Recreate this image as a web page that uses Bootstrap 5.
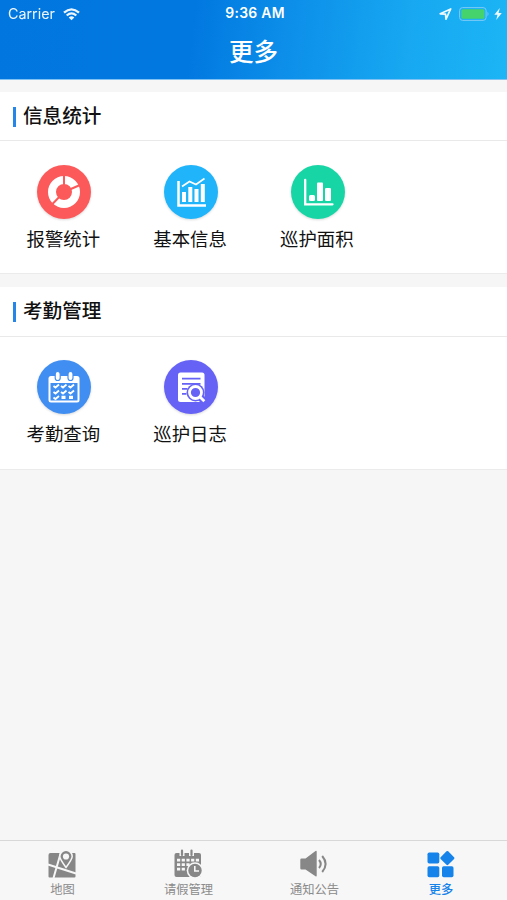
<!DOCTYPE html>
<html lang="zh-CN">
<head>
<meta charset="utf-8">
<meta name="viewport" content="width=device-width, initial-scale=1">
<title>更多</title>
<link href="https://cdn.jsdelivr.net/npm/bootstrap@5.3.0/dist/css/bootstrap.min.css" rel="stylesheet">
<style>
body{font-family:"Inter","Noto Sans CJK SC",sans-serif;background:#f6f6f6;color:#111}
.app-head{height:79.5px;background:linear-gradient(97deg,#0176df 0%,#0178e0 38%,#0c8ee9 56%,#17a8f1 80%,#1cb5f5 100%);border-bottom:1px solid #80c2f4}
.status-bar{height:28px;font-size:14.3px;padding:0 5px 0 8px}
.status-side{flex:1 1 0;opacity:.93}
.status-time{font-weight:600;font-size:13.9px;letter-spacing:.3px;padding-bottom:1px}
.battery{margin-left:7px}
.page-title{font-size:24.5px;line-height:46px;font-weight:500;font-family:"Noto Sans CJK SC",sans-serif}
.panel{background:#fff;margin-top:12.5px;height:182px;border-bottom:1px solid #ebebeb}
.panel + .panel{margin-top:13px;height:183px}
.panel-title{height:49px;border-bottom:1px solid #e9e9e9;padding:2px 0 0 13px;gap:7.5px;font-size:19.6px;font-weight:500;line-height:1}
.panel + .panel .panel-title{height:49.5px}
.title-bar{width:2.5px;height:20px;background:#2586e8}
.tile{padding-top:24px;font-size:18.4px;line-height:27px}
.panel + .panel .tile{padding-top:23.5px}
.tile svg{filter:drop-shadow(0 1px 1px rgba(0,0,0,.15));margin:0 0 7px 1.5px}
.tab-row{height:60px;background:#f7f7f7;border-top:1px solid #d8d8d8;color:#8b8b8b;padding-right:3px}
.tab{font-size:12.3px;line-height:18px;padding-top:8px}
.tab svg{margin:0 1.5px 2px 0}
.tab span{margin-right:1px}
.tab.active{color:#1583ea;font-weight:500}
.tab.active svg,.tab.active span{margin-right:0}
</style>
<script src="https://cdn.jsdelivr.net/npm/bootstrap@5.3.0/dist/js/bootstrap.bundle.min.js"></script>
</head>
<body class="vh-100 d-flex flex-column overflow-hidden">
<header class="app-head text-white flex-shrink-0">
  <div class="status-bar d-flex align-items-center">
    <div class="status-side d-flex align-items-center"><span>Carrier</span>
      <svg class="ms-2" width="17" height="13" viewBox="0 0 17 13" fill="none" stroke="#fff" stroke-width="2.3"><path d="M1 4.7Q8.500-2 16 4.700M3.700 7.500Q8.500 3.300 13.300 7.500"/><path d="M5.700 9.500Q8.500 7.200 11.300 9.500L8.500 12.300Z" fill="#fff" stroke="none"/></svg>
    </div>
    <div class="status-time">9:36 AM</div>
    <div class="status-side d-flex align-items-center justify-content-end">
      <svg width="13" height="12" viewBox="0 0 13 12" fill="none" stroke="#fff" stroke-width="1.700" stroke-linejoin="round"><path d="M1.200 5.800L11.700.900 7 11.200 6.500 6.200Z"/></svg>
      <svg class="battery" width="31" height="14" viewBox="0 0 31 14"><rect x=".6" y=".6" width="26.500" height="12.800" rx="3" fill="none" stroke="#83cdf8"/><rect x="2.300" y="2.300" width="23.100" height="9.400" rx="1.500" fill="#48d663"/><path d="M28.500 4.800q2 2.200 0 4.400z" fill="#83cdf8"/></svg>
      <svg class="ms-1" width="8" height="12" viewBox="0 0 8 12" fill="#fff"><path d="M5.800 0L.3 6.700H3.500L2.200 12 7.800 4.900H4.500Z"/></svg>
    </div>
  </div>
  <h1 class="page-title text-center m-0">更多</h1>
</header>
<main class="flex-grow-1">
  <section class="panel">
    <h2 class="panel-title d-flex align-items-center m-0"><span class="title-bar"></span>信息统计</h2>
    <div class="row g-0 text-center">
      <div class="tile col-3 d-flex flex-column align-items-center">
        <svg width="54" height="54" viewBox="0 0 54 54"><circle cx="27" cy="27" r="27" fill="#fc5a5a"/><circle cx="27" cy="27" r="12" fill="none" stroke="#fff" stroke-width="8"/><path d="M27 27V10M27 27L43 20M27 27L14.500 40" stroke="#fc5a5a" stroke-width="2"/></svg>
        <span>报警统计</span>
      </div>
      <div class="tile col-3 d-flex flex-column align-items-center">
        <svg width="54" height="54" viewBox="0 0 54 54"><circle cx="27" cy="27" r="27" fill="#20b4fa"/><path d="M14.500 16V40.500H42" fill="none" stroke="#fff" stroke-width="2.500"/><path d="M18 27h4v10h-4zM24.300 22h4v15h-4zM30.500 24h4v13h-4zM36.800 19h4v18h-4z" fill="#fff"/><path d="M18 21.500L25.500 16.500 32 19.500 40.500 13.500" fill="none" stroke="#fff" stroke-width="1.700"/></svg>
        <span>基本信息</span>
      </div>
      <div class="tile col-3 d-flex flex-column align-items-center">
        <svg width="54" height="54" viewBox="0 0 54 54"><circle cx="27" cy="27" r="27" fill="#18d5a6"/><path d="M14.200 15V39.300H41.500" fill="none" stroke="#fff" stroke-width="2.300" stroke-linecap="round"/><g fill="#fff"><rect x="18" y="30" width="6" height="6" rx="1.500"/><rect x="26" y="17.500" width="6" height="18.500" rx="1"/><rect x="34" y="23" width="6" height="13" rx="1.300"/></g></svg>
        <span>巡护面积</span>
      </div>
    </div>
  </section>
  <section class="panel">
    <h2 class="panel-title d-flex align-items-center m-0"><span class="title-bar"></span>考勤管理</h2>
    <div class="row g-0 text-center">
      <div class="tile col-3 d-flex flex-column align-items-center">
        <svg width="54" height="54" viewBox="0 0 54 54"><circle cx="27" cy="27" r="27" fill="#408ef2"/><rect x="11.500" y="16" width="31" height="26.500" rx="2.500" fill="#fff"/><rect x="13.500" y="23" width="27" height="17.500" fill="#408ef2"/><g fill="#fff" stroke="#408ef2" stroke-width="1.200"><rect x="18.200" y="11.500" width="5" height="9" rx="2.500"/><rect x="31" y="11.500" width="5" height="9" rx="2.500"/></g><path d="M16.500 26l2 1.500 3.500-3M24 26l2 1.500 3.500-3M31.500 26l2 1.500 3.500-3M16.500 32l2 1.500 3.500-3M24 32l2 1.500 3.500-3M31.500 32l2 1.500 3.500-3M16.500 37.500l2 1.500 3.500-3" fill="none" stroke="#fff" stroke-width="1.800"/><path d="M24.500 35.800h4v3.200h-4zM32 35.800h4v3.200h-4z" fill="#fff"/></svg>
        <span>考勤查询</span>
      </div>
      <div class="tile col-3 d-flex flex-column align-items-center">
        <svg width="54" height="54" viewBox="0 0 54 54"><circle cx="27" cy="27" r="27" fill="#6562f5"/><rect x="14" y="12.500" width="26.500" height="29.500" rx="2.500" fill="#fff"/><path d="M18 18.700H36.500M18 23.800H36.500M18 28.800H23.500M18 33.800H22.500" stroke="#6562f5" stroke-width="1.700"/><path d="M35.500 36.500L42 43" stroke="#6562f5" stroke-width="7"/><circle cx="31.500" cy="32.500" r="9" fill="#6562f5"/><circle cx="31.500" cy="32.500" r="6" fill="none" stroke="#fff" stroke-width="2.800"/><path d="M35.800 36.800L40.300 41.300" stroke="#fff" stroke-width="2.800"/></svg>
        <span>巡护日志</span>
      </div>
    </div>
  </section>
</main>
<nav class="tab-row row g-0 text-center flex-shrink-0">
  <div class="tab col-3 d-flex flex-column align-items-center">
    <svg width="30" height="30" viewBox="0 0 30 30"><path d="M3.500 4H27.500q1 0 1 1V27.500q0 1-1 1H2.500q-1 0-1-1V6q0-2 2-2z" fill="#878787"/><path d="M1 15.500L29 24.500M14 3L6.500 29" stroke="#f7f7f7" stroke-width="2"/><path d="M19 18.500Q12.800 10 12.800 7.500A6.200 6.200 0 0 1 25.200 7.500Q25.200 10 19 18.500Z" fill="#878787" stroke="#f7f7f7" stroke-width="1.500"/><circle cx="19" cy="7.500" r="3.100" fill="#f7f7f7"/></svg>
    <span>地图</span>
  </div>
  <div class="tab col-3 d-flex flex-column align-items-center">
    <svg width="30" height="30" viewBox="0 0 30 30"><rect x="1.500" y="4" width="26.500" height="24" rx="2" fill="#878787"/><path d="M9 1V7M18.500 1V7" stroke="#f7f7f7" stroke-width="5"/><path d="M9 1.500V6M18.500 1.500V6" stroke="#878787" stroke-width="2.200" stroke-linecap="round"/><path d="M4 9.700h3.200v2.800H4zM8.700 9.700h3.200v2.800H8.700zM13.400 9.700h3.200v2.800h-3.200zM18.100 9.700h3.200v2.800h-3.200zM22.800 9.700H26v2.800h-3.200zM4 14.200h3.200V17H4zM8.700 14.200h3.200V17H8.700zM13.400 14.200h3.200V17h-3.200zM4 18.700h3.200v2.800H4zM8.700 18.700h3.200v2.800H8.700z" fill="#f7f7f7"/><circle cx="22" cy="21.500" r="8.300" fill="#f7f7f7"/><circle cx="22" cy="21.500" r="6.700" fill="#878787"/><path d="M21.800 17V22H26" fill="none" stroke="#f7f7f7" stroke-width="1.600"/></svg>
    <span>请假管理</span>
  </div>
  <div class="tab col-3 d-flex flex-column align-items-center">
    <svg width="30" height="30" viewBox="0 0 30 30"><path d="M2.500 9.500H6.500L16.500 2q1.200-.5 1.200.8V26.700q0 1.200-1.200.600L6.500 20.500H2.500q-1.200 0-1.200-1.200V10.700q0-1.200 1.200-1.200z" fill="#878787"/><path d="M20 11Q23.500 15 20 19M23.200 7Q30 15 23.200 23" fill="none" stroke="#878787" stroke-width="2"/></svg>
    <span>通知公告</span>
  </div>
  <div class="tab active col-3 d-flex flex-column align-items-center">
    <svg width="30" height="30" viewBox="0 0 30 30" fill="#1583ea"><rect x="1.500" y="3.500" width="11.800" height="11" rx="1.700"/><rect x="1.500" y="17.300" width="11.800" height="11" rx="1.700"/><rect x="16" y="17.300" width="11.500" height="11" rx="1.700"/><rect x="16" y="3.700" width="10.700" height="10.700" rx="1.200" transform="rotate(45 21.350 9.050)"/></svg>
    <span>更多</span>
  </div>
</nav>
</body>
</html>
